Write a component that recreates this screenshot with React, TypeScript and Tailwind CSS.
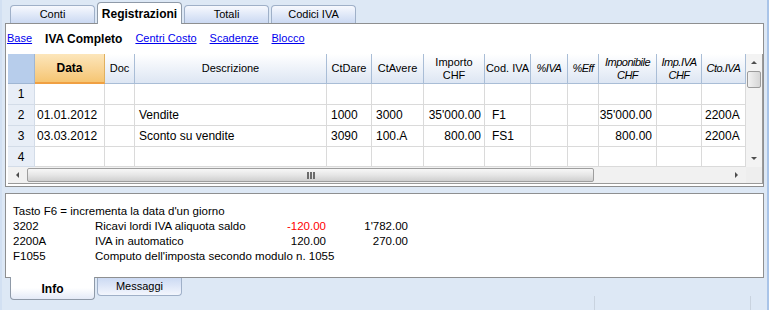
import React from "react";

const font = { fontFamily: '"Liberation Sans", Arial, sans-serif' };

type Col = { label: string; sub?: string; italic?: boolean; align: string };

const cols: Col[] = [
  { label: "Data", align: "pl-[2px] text-left" },
  { label: "Doc", align: "pl-[3px] text-left" },
  { label: "Descrizione", align: "pl-[4px] text-left" },
  { label: "CtDare", align: "pl-[4px] text-left" },
  { label: "CtAvere", align: "pl-[4px] text-left" },
  { label: "Importo", sub: "CHF", align: "pr-[3px] text-right" },
  { label: "Cod. IVA", align: "pl-[7px] text-left" },
  { label: "%IVA", italic: true, align: "pr-[3px] text-right" },
  { label: "%Eff", italic: true, align: "pr-[3px] text-right" },
  { label: "Imponibile", sub: "CHF", italic: true, align: "pr-[4px] text-right" },
  { label: "Imp.IVA", sub: "CHF", italic: true, align: "pr-[3px] text-right" },
  { label: "Cto.IVA", italic: true, align: "pl-[3px] text-left" },
];

const rows: string[][] = [
  ["", "", "", "", "", "", "", "", "", "", "", ""],
  ["01.01.2012", "", "Vendite", "1000", "3000", "35'000.00", "F1", "", "", "35'000.00", "", "2200A"],
  ["03.03.2012", "", "Sconto su vendite", "3090", "100.A", "800.00", "FS1", "", "", "800.00", "", "2200A"],
  ["", "", "", "", "", "", "", "", "", "", "", ""],
];

const rowHeights = ["h-[21px]", "h-[21px]", "h-[21px]", "h-[20px]"];

function TopTab({ label, active }: { label: string; active?: boolean }) {
  if (active) {
    return (
      <div className="relative z-10 -mb-px flex h-[22px] w-[85px] items-center justify-center rounded-t-[4px] border border-b-0 border-[#8f9aa8] bg-white text-[12px] font-bold text-black">
        {label}
      </div>
    );
  }
  return (
    <div className="flex h-[18px] w-[85px] items-center justify-center rounded-t-[4px] border border-b-0 border-[#9fb0c8] bg-gradient-to-b from-[#f7f9fe] to-[#cbd9f2] text-[11px] text-black">
      {label}
    </div>
  );
}

function ScrollArrow({ dir }: { dir: "up" | "down" | "left" | "right" }) {
  const pts = {
    up: "1,5 4,2 7,5",
    down: "1,2 4,5 7,2",
    left: "5,1 2,4 5,7",
    right: "2,1 5,4 2,7",
  }[dir];
  return (
    <svg width="8" height="8" viewBox="0 0 8 8">
      <polygon points={pts} fill="#4d4d4d" />
    </svg>
  );
}

function Grid() {
  const template =
    "grid grid-cols-[27px_70px_30px_192px_45px_52px_61px_46px_37px_31px_58px_45px_44px]";
  return (
    <div className="ml-[2px] mr-[1px] flex w-[755px] flex-col border border-[#9a9a9a] border-l-0 border-t-0">
      <div className="flex">
        <div className="w-[738px] overflow-hidden">
          {/* header */}
          <div className={`${template} h-[30px]`}>
            <div className="border-b border-r border-[#9fb6d3] bg-[#b7cdeb]" />
            {cols.map((c, i) =>
              i === 0 ? (
                <div
                  key={c.label}
                  className="flex items-center justify-center border-b-2 border-r border-b-[#f0a043] border-r-[#e0b060] bg-gradient-to-b from-[#fce6bb] to-[#f6c572] text-[12px] font-bold"
                >
                  {c.label}
                </div>
              ) : (
                <div
                  key={c.label}
                  className={`flex flex-col items-center justify-center border-b border-r border-[#a9bdd6] bg-gradient-to-b from-[#ffffff] to-[#dde6f3] text-[11px] leading-[13px] whitespace-nowrap ${c.italic ? "italic tracking-[-0.5px]" : ""}`}
                >
                  <span>{c.label}</span>
                  {c.sub && <span>{c.sub}</span>}
                </div>
              )
            )}
          </div>
          {/* body */}
          {rows.map((r, ri) => (
            <div key={ri} className={`${template} ${rowHeights[ri]}`}>
              <div className="flex items-center justify-center border-b border-r border-[#d3dce8] bg-[#e8eef7] text-[12px]">
                {ri + 1}
              </div>
              {r.map((v, ci) => (
                <div
                  key={ci}
                  className={`flex items-center overflow-hidden whitespace-nowrap border-b border-r border-[#dadada] text-[12px] ${cols[ci].align} ${cols[ci].align.includes("text-right") ? "justify-end" : "justify-start"}`}
                >
                  {v}
                </div>
              ))}
            </div>
          ))}
        </div>
        {/* vertical scrollbar */}
        <div className="flex w-[16px] flex-col bg-[#f3f3f3]">
          <div className="flex h-[17px] items-center justify-center">
            <ScrollArrow dir="up" />
          </div>
          <div className="mx-[1px] h-[17px] rounded-[2px] border border-[#9c9c9c] bg-gradient-to-r from-[#f2f2f2] to-[#d6d6d6]" />
          <div className="flex-1" />
          <div className="flex h-[16px] items-center justify-center">
            <ScrollArrow dir="down" />
          </div>
        </div>
      </div>
      {/* horizontal scrollbar */}
      <div className="flex h-[16px]">
        <div className="flex w-[738px] items-center bg-[#f1f1f1]">
          <div className="flex w-[19px] items-center justify-center">
            <ScrollArrow dir="left" />
          </div>
          <div className="flex h-[14px] w-[567px] items-center justify-center rounded-[2px] border border-[#9e9e9e] bg-gradient-to-b from-[#f7f7f7] via-[#e6e6e6] to-[#cfcfcf]">
            <div className="flex gap-[1px]">
              <div className="h-[7px] w-[2px] bg-[#6b6b6b]" />
              <div className="h-[7px] w-[2px] bg-[#6b6b6b]" />
              <div className="h-[7px] w-[2px] bg-[#6b6b6b]" />
            </div>
          </div>
          <div className="flex-1" />
          <div className="flex w-[19px] items-center justify-center">
            <ScrollArrow dir="right" />
          </div>
        </div>
        <div className="w-[16px] bg-[#eeeeee]" />
      </div>
    </div>
  );
}

export default function App() {
  const info: [string, string, string, string, boolean][] = [
    ["3202", "Ricavi lordi IVA aliquota saldo", "-120.00", "1'782.00", true],
    ["2200A", "IVA in automatico", "120.00", "270.00", false],
  ];
  return (
    <div
      style={font}
      className="relative flex h-[310px] w-[769px] flex-col overflow-hidden border-l-[2px] border-r-[2px] border-l-[#d2e0f2] border-r-[#a9c4e8] bg-[#dde8f5] text-black"
    >
      {/* top tabs */}
      <div className="flex h-[23px] items-end gap-[2px] pl-[8px]">
        <TopTab label="Conti" />
        <TopTab label="Registrazioni" active />
        <TopTab label="Totali" />
        <TopTab label="Codici IVA" />
      </div>

      {/* main panel */}
      <div className="mx-[3px] flex h-[164px] flex-col border border-[#8e8f90] bg-white">
        <div className="flex h-[30px] items-center gap-[13px] pl-[1px] pb-[1px] text-[11px]">
          <span className="text-[#0000ee] underline">Base</span>
          <span className="text-[12px] font-bold">IVA Completo</span>
          <span className="text-[#0000ee] underline">Centri Costo</span>
          <span className="text-[#0000ee] underline">Scadenze</span>
          <span className="text-[#0000ee] underline">Blocco</span>
        </div>
        <Grid />
      </div>

      {/* info panel */}
      <div className="mx-[3px] mt-[6px] flex h-[85px] flex-col border border-[#8e8f90] bg-white pl-[7px] pt-[10px] text-[11.5px] leading-[15px]">
        <div>Tasto F6 = incrementa la data d'un giorno</div>
        {info.map(([code, desc, amt, bal, red]) => (
          <div key={code} className="flex">
            <span className="w-[82px]">{code}</span>
            <span className="w-[157px]">{desc}</span>
            <span className={`w-[74px] text-right ${red ? "text-[#ff0000]" : ""}`}>{amt}</span>
            <span className="w-[82px] text-right">{bal}</span>
          </div>
        ))}
        <div className="flex">
          <span className="w-[82px]">F1055</span>
          <span>Computo dell'imposta secondo modulo n. 1055</span>
        </div>
      </div>

      {/* bottom tabs */}
      <div className="flex items-start gap-[2px] pl-[8px]">
        <div className="-mt-px flex h-[23px] w-[85px] items-center justify-center rounded-b-[4px] border border-t-0 border-[#8f9aa8] bg-gradient-to-b from-white via-white to-[#e4eaf7] pt-[2px] text-[12px] font-bold">
          Info
        </div>
        <div className="flex h-[18px] w-[85px] items-center justify-center rounded-b-[4px] border border-t-0 border-[#9fb0c8] bg-gradient-to-b from-[#ccdaf3] to-[#f3f6fd] text-[11px]">
          Messaggi
        </div>
        <div className="ml-auto mt-[18px] flex">
          <div className="h-[14px] w-px bg-[#c9d3df]" />
          <div className="ml-[155px] mr-[16px] h-[14px] w-px bg-[#c9d3df]" />
        </div>
      </div>
    </div>
  );
}
